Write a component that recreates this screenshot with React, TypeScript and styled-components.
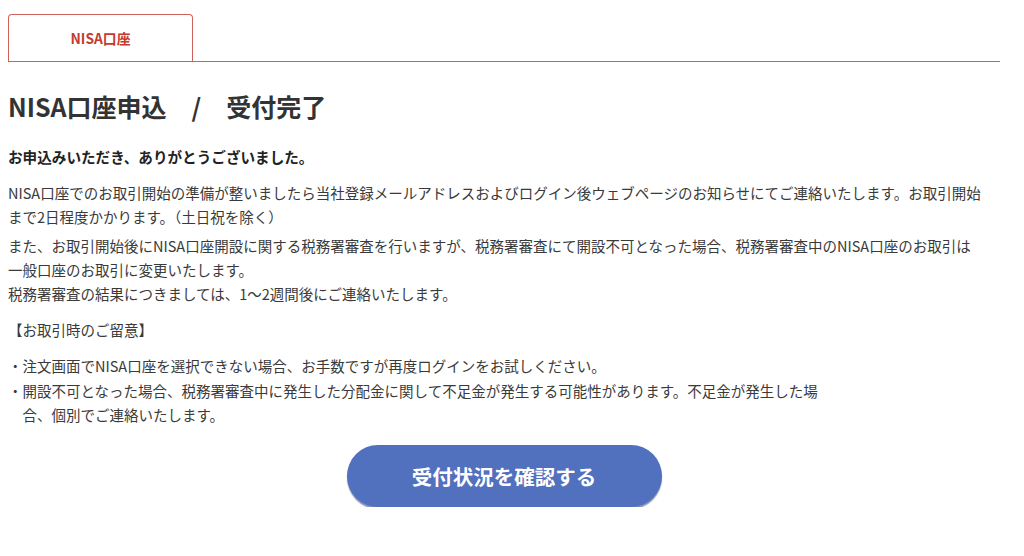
import styled, { createGlobalStyle } from 'styled-components'

const GlobalStyle = createGlobalStyle`
    body {
        margin: 8px;
        background: #ffffff;
        font-family: 'Noto Sans CJK JP', 'Noto Sans', sans-serif;
        color: #3a3a3a;
    }
    p, h1, ul {
        margin: 0;
        padding: 0;
    }
`

const Page = styled.div`
    width: 992px;
    padding-top: 6px;
`
const TabBar = styled.div`
    display: flex;
    height: 47px;
    border-bottom: 1px solid #d0605a;
`
const Tab = styled.div`
    width: 183px;
    border: 1px solid #d0605a;
    border-bottom: none;
    border-radius: 4px 4px 0 0;
    display: flex;
    align-items: center;
    justify-content: center;
    color: #c33a30;
    font-size: 13.8px;
    font-weight: 700;
`
const Title = styled.h1`
    margin-top: 28px;
    font-size: 25px;
    line-height: 32px;
    font-weight: 700;
    color: #333333;
    white-space: pre;
`
const Thanks = styled.p`
    margin-top: 23px;
    font-size: 14.6px;
    line-height: 24px;
    font-weight: 700;
    color: #222222;
`
const Text = styled.p<{ $gap: number }>`
    margin-top: ${p => p.$gap}px;
    max-width: 978px;
    font-size: 14.5px;
    line-height: 24px;
`
const NoteList = styled.ul`
    margin-top: 12px;
    max-width: 826px;
    list-style: none;
`
const NoteItem = styled.li`
    font-size: 14.5px;
    line-height: 24.5px;
    padding-left: 1em;
    text-indent: -1em;
`
const ButtonRow = styled.div`
    display: flex;
    justify-content: center;
    margin-top: 17px;
`
const Button = styled.button`
    width: 315px;
    height: 62px;
    border: none;
    border-radius: 31px;
    background: #5170be;
    box-shadow: 0 2px 1px rgba(40, 60, 120, 0.55);
    color: #ffffff;
    font-family: 'Noto Sans CJK JP', sans-serif;
    font-size: 20.5px;
    font-weight: 700;
    cursor: pointer;
`

const notes = [
    '・注文画面でNISA口座を選択できない場合、お手数ですが再度ログインをお試しください。',
    '・開設不可となった場合、税務署審査中に発生した分配金に関して不足金が発生する可能性があります。不足金が発生した場合、個別でご連絡いたします。',
]

const App = () => {
    return (
        <Page>
            <GlobalStyle />
            <TabBar>
                <Tab>NISA口座</Tab>
            </TabBar>
            <Title>{'NISA口座申込　/　受付完了'}</Title>
            <Thanks>お申込みいただき、ありがとうございました。</Thanks>
            <Text $gap={12}>
                NISA口座でのお取引開始の準備が整いましたら当社登録メールアドレスおよびログイン後ウェブページのお知らせにてご連絡いたします。お取引開始まで2日程度かかります。（土日祝を除く）
            </Text>
            <Text $gap={5}>
                また、お取引開始後にNISA口座開設に関する税務署審査を行いますが、税務署審査にて開設不可となった場合、税務署審査中のNISA口座のお取引は
                <br />
                一般口座のお取引に変更いたします。
                <br />
                税務署審査の結果につきましては、1〜2週間後にご連絡いたします。
            </Text>
            <Text $gap={12}>【お取引時のご留意】</Text>
            <NoteList>
                {notes.map(n => (
                    <NoteItem key={n}>{n}</NoteItem>
                ))}
            </NoteList>
            <ButtonRow>
                <Button>受付状況を確認する</Button>
            </ButtonRow>
        </Page>
    )
}

export default App
